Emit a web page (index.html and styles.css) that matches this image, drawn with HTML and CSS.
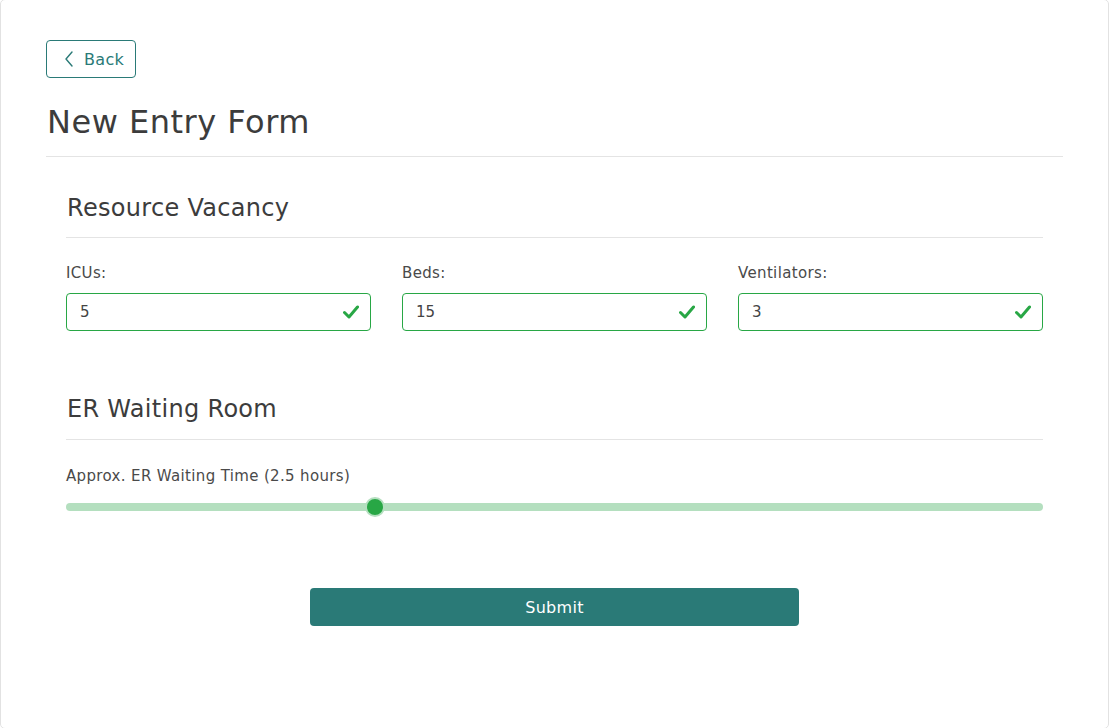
FILE: index.html
```html
<!DOCTYPE html>
<html lang="en">
<head>
<meta charset="utf-8">
<title>New Entry Form</title>
<link rel="stylesheet" href="styles.css">
</head>
<body>
<div class="card">
  <button class="back-btn" type="button">
    <svg class="chev" width="10" height="16" viewBox="0 0 10 16"><path d="M8 1 L2 8 L8 15" fill="none" stroke="currentColor" stroke-width="1.4" stroke-linecap="round" stroke-linejoin="round"/></svg>
    <span>Back</span>
  </button>
  <h1 class="page-title">New Entry Form</h1>

  <section class="form-section">
    <h2 class="section-title">Resource Vacancy</h2>
    <div class="field-grid">
      <div class="field">
        <label class="field-label">ICUs:</label>
        <div class="input-box"><span class="input-value">5</span>
          <svg class="check" width="16" height="14" viewBox="0 0 16 14"><path d="M1.5 7.5 L6 12 L14.5 2" fill="none" stroke="currentColor" stroke-width="3" stroke-linecap="round" stroke-linejoin="round"/></svg>
        </div>
      </div>
      <div class="field">
        <label class="field-label">Beds:</label>
        <div class="input-box"><span class="input-value">15</span>
          <svg class="check" width="16" height="14" viewBox="0 0 16 14"><path d="M1.5 7.5 L6 12 L14.5 2" fill="none" stroke="currentColor" stroke-width="3" stroke-linecap="round" stroke-linejoin="round"/></svg>
        </div>
      </div>
      <div class="field">
        <label class="field-label">Ventilators:</label>
        <div class="input-box"><span class="input-value">3</span>
          <svg class="check" width="16" height="14" viewBox="0 0 16 14"><path d="M1.5 7.5 L6 12 L14.5 2" fill="none" stroke="currentColor" stroke-width="3" stroke-linecap="round" stroke-linejoin="round"/></svg>
        </div>
      </div>
    </div>
  </section>

  <section class="form-section second">
    <h2 class="section-title">ER Waiting Room</h2>
    <label class="field-label">Approx. ER Waiting Time (2.5 hours)</label>
    <input class="slider" type="range" min="0" max="8" step="0.5" value="2.5">
    <div class="submit-row">
      <button class="submit-btn" type="button">Submit</button>
    </div>
  </section>
</div>
</body>
</html>
```

FILE: styles.css
```css
* { box-sizing: border-box; }
html, body {
  margin: 0;
  padding: 0;
  background: #fff;
  font-family: "DejaVu Sans", "Noto Sans", sans-serif;
  color: #444;
}
.card {
  margin: -1px 0;
  height: 730px;
  border: 1px solid #e2e2e2;
  border-radius: 5px;
  padding: 40px 45px 0 45px;
}
.back-btn {
  display: inline-flex;
  align-items: center;
  gap: 10px;
  height: 38px;
  width: 90px;
  padding: 0 0 0 17px;
  border: 1px solid #2a7a77;
  border-radius: 4px;
  background: #fff;
  color: #2a7a77;
  font-family: inherit;
  font-size: 16px;
  letter-spacing: 0.3px;
  cursor: pointer;
}
.chev { display: block; }
.page-title {
  margin: 24px 0 0 0;
  padding: 0 0 13px 1px;
  font-size: 32px;
  font-weight: 400;
  letter-spacing: 0.5px;
  line-height: 41px;
  color: #3c3c3c;
  border-bottom: 1px solid #e4e4e4;
}
.form-section {
  padding: 0 20px;
}
.section-title {
  margin: 33px 0 0 0;
  padding: 0 0 11px 1px;
  font-size: 24px;
  font-weight: 400;
  letter-spacing: 0.3px;
  line-height: 36px;
  color: #3c3c3c;
  border-bottom: 1px solid #e4e4e4;
}
.second .section-title {
  margin-top: 60px;
  padding-bottom: 12px;
}
.field-grid {
  display: grid;
  grid-template-columns: repeat(3, 1fr);
  column-gap: 31px;
  margin-top: 20px;
}
.field-label {
  display: block;
  font-size: 15px;
  letter-spacing: 0.35px;
  line-height: 30px;
  color: #4a4a4a;
}
.second .field-label { margin-top: 21px; }
.input-box {
  margin-top: 5px;
  height: 38px;
  border: 1px solid #28a745;
  border-radius: 4px;
  display: flex;
  align-items: center;
  justify-content: space-between;
  padding: 0 11px 0 13px;
}
.input-value {
  font-size: 15px;
  color: #444;
}
.check { color: #28a745; display: block; }
.slider {
  -webkit-appearance: none;
  appearance: none;
  display: block;
  width: 100%;
  height: 22px;
  margin: 5px 0 0 0;
  padding: 0;
  background: transparent;
}
.slider::-webkit-slider-runnable-track {
  height: 8px;
  background: #b4dfbf;
  border-radius: 4px;
}
.slider::-webkit-slider-thumb {
  -webkit-appearance: none;
  appearance: none;
  width: 20px;
  height: 20px;
  margin-top: -6px;
  border-radius: 50%;
  background: #28a745;
  border: 2px solid #b4dfbf;
}
.submit-row {
  display: flex;
  justify-content: center;
  margin-top: 70px;
}
.submit-btn {
  width: 489px;
  height: 38px;
  border: none;
  border-radius: 4px;
  background: #2a7a77;
  color: #fff;
  font-family: inherit;
  font-size: 16px;
  letter-spacing: 0.3px;
  cursor: pointer;
}
```
